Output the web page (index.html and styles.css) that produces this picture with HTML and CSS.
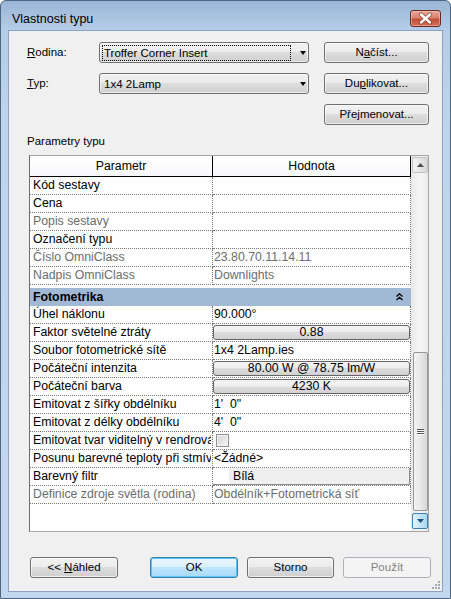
FILE: index.html
```html
<!DOCTYPE html>
<html lang="cs">
<head>
<meta charset="utf-8">
<title>Vlastnosti typu</title>
<link rel="stylesheet" href="styles.css">
</head>
<body>
<div class="window">
  <div class="titlebar">
    <span class="title">Vlastnosti typu</span>
    <div class="close">
      <svg width="29" height="15" viewBox="0 0 29 15">
        <path d="M10 3.5 L19 11.5 M19 3.5 L10 11.5" stroke="#5e2a20" stroke-width="4.2" stroke-linecap="round" opacity="0.55"/>
        <path d="M10 3.5 L19 11.5 M19 3.5 L10 11.5" stroke="#ffffff" stroke-width="2.4" stroke-linecap="round"/>
      </svg>
    </div>
  </div>
  <div class="client">
    <div class="top">
      <span class="lbl"><u>R</u>odina:</span>
      <div class="combo"><span class="focusrect">Troffer Corner Insert</span><span class="arrow"></span></div>
      <button class="btn">N<u>a</u>číst...</button>

      <span class="lbl"><u>T</u>yp:</span>
      <div class="combo"><span class="ctext">1x4 2Lamp</span><span class="arrow"></span></div>
      <button class="btn">Du<u>p</u>likovat...</button>

      <span></span><span></span>
      <button class="btn">Pře<u>j</u>menovat...</button>
    </div>

    <div class="section-label">Parametry typu</div>

    <div class="gridbox">
      <div class="grid">
        <div class="hdr">
          <div class="h1">Parametr</div>
          <div class="h2">Hodnota</div>
        </div>
        <div class="row"><div class="c1">Kód sestavy</div><div class="c2"></div></div>
        <div class="row"><div class="c1">Cena</div><div class="c2"></div></div>
        <div class="row ro"><div class="c1">Popis sestavy</div><div class="c2"></div></div>
        <div class="row"><div class="c1">Označení typu</div><div class="c2"></div></div>
        <div class="row ro"><div class="c1">Číslo OmniClass</div><div class="c2">23.80.70.11.14.11</div></div>
        <div class="row ro"><div class="c1">Nadpis OmniClass</div><div class="c2">Downlights</div></div>

        <div class="group">
          <span>Fotometrika</span>
          <svg width="7" height="8" viewBox="0 0 7 8"><path d="M0.5 3.5 L3.5 0.8 L6.5 3.5 M0.5 7 L3.5 4.3 L6.5 7" stroke="#000" stroke-width="1.3" fill="none"/></svg>
        </div>

        <div class="row"><div class="c1">Úhel náklonu</div><div class="c2">90.000°</div></div>
        <div class="row"><div class="c1">Faktor světelné ztráty</div><div class="c2 nopad"><div class="vbtn">0.88</div></div></div>
        <div class="row"><div class="c1">Soubor fotometrické sítě</div><div class="c2">1x4 2Lamp.ies</div></div>
        <div class="row"><div class="c1">Počáteční intenzita</div><div class="c2 nopad"><div class="vbtn">80.00 W @ 78.75 lm/W</div></div></div>
        <div class="row"><div class="c1">Počáteční barva</div><div class="c2 nopad"><div class="vbtn">4230 K</div></div></div>
        <div class="row"><div class="c1">Emitovat z šířky obdélníku</div><div class="c2">1'&nbsp; 0"</div></div>
        <div class="row"><div class="c1">Emitovat z délky obdélníku</div><div class="c2">4'&nbsp; 0"</div></div>
        <div class="row"><div class="c1"><span class="clip">Emitovat tvar viditelný v rendrování</span></div><div class="c2"><span class="check"></span></div></div>
        <div class="row"><div class="c1"><span class="clip">Posunu barevné teploty při stmívání</span></div><div class="c2">&lt;Žádné&gt;</div></div>
        <div class="row"><div class="c1">Barevný filtr</div><div class="c2 nopad"><div class="colorbar"><span class="swatch"></span><span class="cname">Bílá</span></div></div></div>
        <div class="row ro"><div class="c1">Definice zdroje světla (rodina)</div><div class="c2">Obdélník+Fotometrická síť</div></div>
      </div>
      <div class="scroll">
        <div class="sbtn up"><svg width="7" height="4" viewBox="0 0 7 4"><path d="M0 4 L3.5 0 L7 4 Z" fill="#4d4d4d"/></svg></div>
        <div class="track"></div>
        <div class="thumb"><span class="gripline"></span><span class="gripline"></span><span class="gripline"></span></div>
        <div class="sbtn down"><svg width="7" height="4" viewBox="0 0 7 4"><path d="M0 0 L7 0 L3.5 4 Z" fill="#1f4e7a"/></svg></div>
      </div>
    </div>

    <div class="buttons">
      <button class="btn bb">&lt;&lt; <u>N</u>áhled</button>
      <button class="btn bb default ok">OK</button>
      <button class="btn bb storno">Storno</button>
      <button class="btn bb disabled">Použít</button>
    </div>

    <svg class="sizegrip" width="10" height="10" viewBox="0 0 10 10">
      <g fill="#a0a8b3">
        <rect x="7" y="1" width="2" height="2"/>
        <rect x="4" y="4" width="2" height="2"/><rect x="7" y="4" width="2" height="2"/>
        <rect x="1" y="7" width="2" height="2"/><rect x="4" y="7" width="2" height="2"/><rect x="7" y="7" width="2" height="2"/>
      </g>
    </svg>
  </div>
</div>
</body>
</html>
```

FILE: styles.css
```css
* { box-sizing: border-box; }

body {
  margin: 0;
  font-family: "Liberation Sans", Arial, sans-serif;
  color: #000;
}

.window {
  width: 451px;
  height: 599px;
  border: 1px solid #4f6683;
  border-radius: 6px 6px 0 0;
  background: linear-gradient(#9ab6d7 0, #b6cde7 30px, #bdd4ec 120px, #c3d8ee 100%);
  display: flex;
  flex-direction: column;
}

.titlebar {
  height: 29px;
  display: flex;
  justify-content: space-between;
  align-items: flex-start;
  padding: 9px 9px 0 11px;
}

.title {
  font-size: 12.5px;
  line-height: 18px;
  color: #000;
}

.close {
  width: 31px;
  height: 17px;
  border: 1px solid #6b2a20;
  border-radius: 3px;
  background: linear-gradient(#e7a798 0, #d7826f 45%, #c4503a 55%, #cf6e58 100%);
  box-shadow: inset 0 0 0 1px rgba(255, 210, 200, 0.45);
  display: flex;
  align-items: center;
  justify-content: center;
}

.client {
  margin: 0 7px;
  height: 562px;
  border: 1px solid #8ba3c1;
  background: #f0f0f0;
  position: relative;
  display: flex;
  flex-direction: column;
  font-size: 11px;
}

.top {
  display: grid;
  grid-template-columns: 57px 210px 105px;
  grid-auto-rows: 21px;
  column-gap: 15px;
  row-gap: 10px;
  padding: 11px 0 0 18px;
}

.lbl {
  line-height: 21px;
  font-size: 11.5px;
}

.combo, .btn {
  border: 1px solid #707070;
  border-radius: 3px;
  background: linear-gradient(#f2f2f2 0, #ebebeb 50%, #dddddd 50%, #cfcfcf 100%);
  box-shadow: inset 0 0 0 1px rgba(255, 255, 255, 0.6);
  font-family: "Liberation Sans", Arial, sans-serif;
  font-size: 11.5px;
  color: #000;
}

.combo {
  display: flex;
  align-items: center;
  padding: 0 0 0 2px;
  position: relative;
}

.focusrect {
  width: 189px;
  height: 16px;
  line-height: 14px;
  border: 1px dotted #000;
  padding-left: 1px;
  white-space: nowrap;
}

.ctext {
  width: 189px;
  padding-left: 2px;
  line-height: 16px;
}

.arrow {
  margin-left: 9px;
  width: 0;
  height: 0;
  border-left: 3.5px solid transparent;
  border-right: 3.5px solid transparent;
  border-top: 4px solid #000;
}

.btn {
  padding: 0;
  text-align: center;
  line-height: 19px;
}

.section-label {
  margin: 9px 0 0 18px;
  font-size: 11.5px;
  line-height: 14px;
}

.gridbox {
  margin: 7px 0 0 20px;
  width: 400px;
  height: 377px;
  border: 1px solid #a5a5a5;
  border-left-color: #6e6e6e;
  background: #fff;
  display: flex;
}

.grid {
  width: 381px;
  font-size: 12.3px;
  line-height: 17px;
}

.hdr {
  display: flex;
  height: 21px;
  border-bottom: 1px solid #000;
  background: linear-gradient(#ffffff, #f7f8fa);
}

.h1, .h2 {
  border-right: 1px solid #000;
  text-align: center;
  line-height: 20px;
}

.h1 { width: 183px; }
.h2 { width: 198px; }

.row {
  display: flex;
  height: 18px;
}

.c1, .c2 {
  height: 18px;
  border-bottom: 1px dotted #7a7a7a;
  border-right: 1px dotted #7a7a7a;
  white-space: nowrap;
  overflow: hidden;
}

.c1 {
  width: 183px;
  padding-left: 3px;
}

.clip {
  display: block;
  width: 178px;
  overflow: hidden;
  white-space: nowrap;
}

.c2 {
  width: 198px;
  padding-left: 1px;
}

.c2.nopad { padding-left: 0; }

.ro { color: #6d6d6d; }

.group {
  margin-top: 3px;
  height: 18px;
  background: #a1b9d5;
  display: flex;
  justify-content: space-between;
  align-items: center;
  padding: 0 8px 0 3px;
  font-weight: bold;
}

.vbtn {
  margin-top: 1px;
  height: 15px;
  border: 1px solid #666;
  border-radius: 3px;
  background: linear-gradient(#f4f4f4 0, #ececec 50%, #dedede 50%, #d2d2d2 100%);
  text-align: center;
  line-height: 13px;
  color: #000;
}

.check {
  display: block;
  margin: 2px 0 0 2px;
  width: 13px;
  height: 13px;
  border: 1px solid #8e8f8f;
  background: linear-gradient(135deg, #d4d4d4, #f6f6f6);
  box-shadow: inset 0 0 0 1px #f4f4f4;
}

.colorbar {
  display: flex;
  height: 17px;
  background: #efefef;
  border-right: 1px solid #8c8c8c;
  border-bottom: 1px solid #8c8c8c;
}

.swatch {
  width: 16px;
  background: #fff;
}

.cname {
  padding-left: 4px;
  line-height: 16px;
}

.scroll {
  width: 17px;
  background: linear-gradient(90deg, #e8e8e8, #f4f4f4 40%, #f4f4f4 70%, #eaeaea);
  display: flex;
  flex-direction: column;
  padding: 1px 0 2px 1px;
}

.sbtn {
  width: 16px;
  height: 16px;
  border: 1px solid #c2c2c2;
  border-radius: 2px;
  background: linear-gradient(90deg, #f2f2f2, #e6e6e6 50%, #d8d8d8);
  display: flex;
  align-items: center;
  justify-content: center;
}

.sbtn.down {
  border-color: #3c7fb1;
  background: linear-gradient(90deg, #e3f4fc, #c4e5f6 50%, #a9d9f2);
}

.track { flex: 1; }

.thumb {
  height: 159px;
  width: 15px;
  margin: 0 0 2px 1px;
  border: 1px solid #979797;
  border-radius: 2px;
  background: linear-gradient(90deg, #f3f3f3, #e8e8e8 50%, #d6d6d6);
  display: flex;
  flex-direction: column;
  align-items: center;
  justify-content: center;
  gap: 1px;
}

.gripline {
  width: 7px;
  height: 1px;
  background: #555;
  box-shadow: 0 1px 0 #fff;
}

.buttons {
  display: flex;
  margin-top: 25px;
  padding-left: 21px;
}

.bb {
  width: 88px;
  height: 21px;
}

.ok { margin-left: 32px; }
.storno { margin-left: 9px; width: 87px; }
.disabled { margin-left: 9px; }

.default {
  border-color: #3c7fb1;
  background: linear-gradient(#eaf6fd 0, #d9f0fc 50%, #bee6fd 50%, #a7d9f5 100%);
  box-shadow: inset 0 0 0 1px #58c6f0;
}

.disabled {
  border-color: #adb2b5;
  background: #f4f4f4;
  box-shadow: none;
  color: #838383;
}

.sizegrip {
  position: absolute;
  right: 1px;
  bottom: 1px;
}
```
